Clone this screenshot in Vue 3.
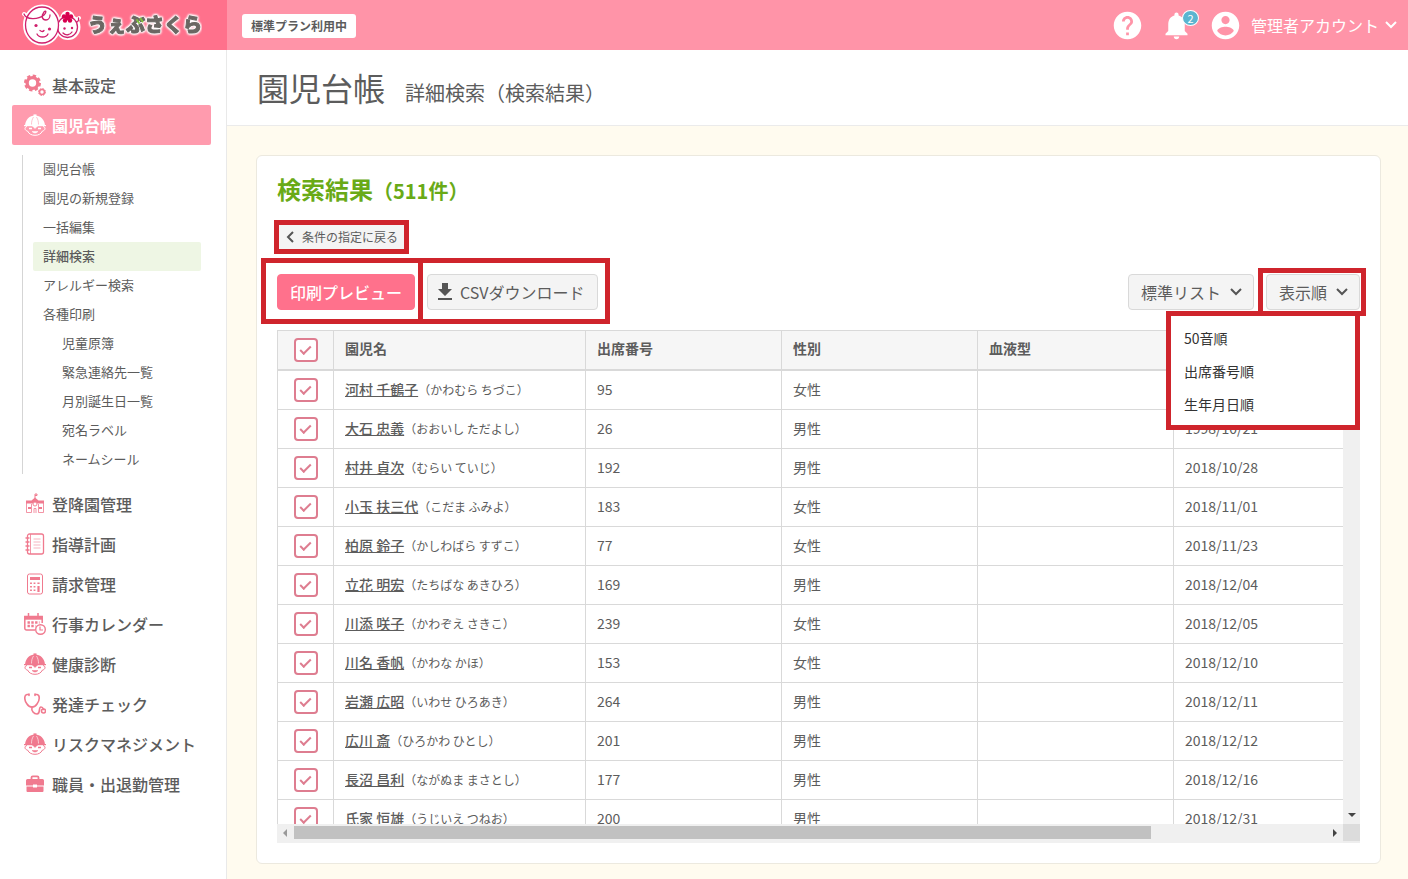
<script setup>
import { ref } from 'vue'

const menuTop = [
  { label: '基本設定', icon: 'gear' },
  { label: '園児台帳', icon: 'child', active: true },
]

const subMenu = [
  { label: '園児台帳' },
  { label: '園児の新規登録' },
  { label: '一括編集' },
  { label: '詳細検索', active: true },
  { label: 'アレルギー検索' },
  { label: '各種印刷' },
  { label: '児童原簿', nested: true },
  { label: '緊急連絡先一覧', nested: true },
  { label: '月別誕生日一覧', nested: true },
  { label: '宛名ラベル', nested: true },
  { label: 'ネームシール', nested: true },
]

const menuBottom = [
  { label: '登降園管理', icon: 'school' },
  { label: '指導計画', icon: 'note' },
  { label: '請求管理', icon: 'calc' },
  { label: '行事カレンダー', icon: 'calendar' },
  { label: '健康診断', icon: 'child' },
  { label: '発達チェック', icon: 'steth' },
  { label: 'リスクマネジメント', icon: 'child' },
  { label: '職員・出退勤管理', icon: 'case' },
]

const groups = [
  { items: menuTop, sub: subMenu },
  { items: menuBottom, sub: [] },
]

const rows = ref([
  { name: '河村 千鶴子', kana: 'かわむら ちづこ', no: 95, sex: '女性', birth: '1998/10/20' },
  { name: '大石 忠義', kana: 'おおいし ただよし', no: 26, sex: '男性', birth: '1998/10/21' },
  { name: '村井 貞次', kana: 'むらい ていじ', no: 192, sex: '男性', birth: '2018/10/28' },
  { name: '小玉 扶三代', kana: 'こだま ふみよ', no: 183, sex: '女性', birth: '2018/11/01' },
  { name: '柏原 鈴子', kana: 'かしわばら すずこ', no: 77, sex: '女性', birth: '2018/11/23' },
  { name: '立花 明宏', kana: 'たちばな あきひろ', no: 169, sex: '男性', birth: '2018/12/04' },
  { name: '川添 咲子', kana: 'かわぞえ さきこ', no: 239, sex: '女性', birth: '2018/12/05' },
  { name: '川名 香帆', kana: 'かわな かほ', no: 153, sex: '女性', birth: '2018/12/10' },
  { name: '岩瀬 広昭', kana: 'いわせ ひろあき', no: 264, sex: '男性', birth: '2018/12/11' },
  { name: '広川 斎', kana: 'ひろかわ ひとし', no: 201, sex: '男性', birth: '2018/12/12' },
  { name: '長沼 昌利', kana: 'ながぬま まさとし', no: 177, sex: '男性', birth: '2018/12/16' },
  { name: '氏家 恒雄', kana: 'うじいえ つねお', no: 200, sex: '男性', birth: '2018/12/31' },
])

const sortOptions = ['50音順', '出席番号順', '生年月日順']
const sortOpen = ref(true)
</script>

<template>
  <div class="shell">
    <header class="topbar">
      <a class="brand" href="#" aria-label="うぇぶさくら">
        <svg class="brand-art" viewBox="0 0 190 50" width="190" height="50">
          <g stroke="#fff" stroke-width="4" fill="#fff" stroke-linejoin="round" stroke-linecap="round">
            <ellipse cx="30" cy="25" rx="17" ry="18.500" />
            <ellipse cx="56" cy="27" rx="10.500" ry="11" />
            <circle cx="55.500" cy="17.500" r="5" />
            <path d="M12 14l6 4M63 21l4-3" />
          </g>
          <g fill="none" stroke="#cf1f6c" stroke-width="1.300" stroke-linecap="round">
            <ellipse cx="55.500" cy="27" rx="10" ry="10.500" />
            <ellipse cx="30" cy="25" rx="16.500" ry="18" fill="#fff" />
            <path d="M12 14c2 6 14 6 20 1 3-3 2-5 0-3-3 4-2 8 2 8 2 0 4-2 4-5" />
            <path d="M64.500 22c1.500 0 2.500-2 2-4" />
            <path d="M25 34c2 4 9 4 11 0M28 30.500q2.500 2 4 0M51 33c3 3 7 2 9-1" />
          </g>
          <g fill="#cf1f6c">
            <circle cx="24" cy="25.500" r="1.600" />
            <circle cx="37.500" cy="29" r="1.600" />
            <circle cx="52.500" cy="28.500" r="1.200" />
            <circle cx="60" cy="28" r="1.200" />
          </g>
          <g fill="#d8004f">
            <circle cx="55.500" cy="14" r="2.200" />
            <circle cx="59" cy="16.500" r="2.200" />
            <circle cx="58" cy="20.500" r="2.200" />
            <circle cx="53" cy="20.500" r="2.200" />
            <circle cx="52" cy="16.500" r="2.200" />
            <circle cx="55.500" cy="17.500" r="2.800" />
          </g>
          <text class="brand-text" x="76" y="32">うぇぶさくら</text>
          <path d="M125 20l2 3M128.500 18.500l2 3" stroke="#7fbe3c" stroke-width="2" stroke-linecap="round" />
        </svg>
      </a>
      <div class="topbar-main">
        <span class="plan">標準プラン利用中</span>
        <div class="tools">
          <button class="tool" type="button" aria-label="ヘルプ">
            <svg viewBox="0 0 24 24" width="33" height="33"><path fill="#fff" d="M12 2C6.480 2 2 6.480 2 12s4.480 10 10 10 10-4.480 10-10S17.520 2 12 2zm1 17h-2v-2h2v2zm2.070-7.750l-.9.920C13.450 12.900 13 13.500 13 15h-2v-.5c0-1.100.45-2.100 1.170-2.830l1.240-1.260c.37-.36.590-.86.590-1.410 0-1.100-.9-2-2-2s-2 .9-2 2H8c0-2.210 1.790-4 4-4s4 1.790 4 4c0 .88-.36 1.680-.93 2.250z" /></svg>
          </button>
          <button class="tool bell" type="button" aria-label="お知らせ">
            <svg viewBox="0 0 24 24" width="33" height="33"><path fill="#fff" d="M12 22c1.100 0 2-.9 2-2h-4c0 1.100.89 2 2 2zm6-6v-5c0-3.070-1.640-5.640-4.500-6.320V4c0-.83-.67-1.500-1.500-1.500s-1.500.67-1.500 1.500v.68C7.630 5.360 6 7.920 6 11v5l-2 2v1h16v-1l-2-2z" /></svg>
            <span class="count">2</span>
          </button>
          <button class="account" type="button">
            <svg viewBox="0 0 24 24" width="33" height="33"><path fill="#fff" d="M12 2C6.480 2 2 6.480 2 12s4.480 10 10 10 10-4.480 10-10S17.520 2 12 2zm0 3c1.660 0 3 1.340 3 3s-1.340 3-3 3-3-1.340-3-3 1.340-3 3-3zm0 14.200c-2.500 0-4.710-1.280-6-3.220.03-1.990 4-3.080 6-3.080 1.990 0 5.970 1.090 6 3.080-1.290 1.940-3.500 3.220-6 3.220z" /></svg>
            <span class="account-name">管理者アカウント</span>
            <svg viewBox="0 0 12 8" width="12" height="8"><path d="M1 1l5 5 5-5" fill="none" stroke="#fff" stroke-width="2" /></svg>
          </button>
        </div>
      </div>
    </header>

    <div class="body">
      <nav class="sidebar">
        <template v-for="(group, g) in groups" :key="g">
          <a v-for="item in group.items" :key="item.label" href="#" class="nav-item" :class="{ active: item.active }">
            <svg class="nav-icon" viewBox="0 0 22 22" width="22" height="22" fill="none" stroke="currentColor">
              <g v-if="item.icon === 'gear'">
                <circle cx="8.500" cy="9" r="5.400" stroke-width="3.400" />
                <circle cx="8.500" cy="9" r="7.300" stroke-width="2.400" stroke-dasharray="3.300 2.434" />
                <circle cx="18" cy="18" r="2.500" stroke-width="1.600" />
                <circle cx="18" cy="18" r="3.500" stroke-width="1" stroke-dasharray="1.600 1.149" />
              </g>
              <g v-else-if="item.icon === 'child'">
                <path d="M1 11.500C1.500 5.500 5.500 1.500 11 1.500s9.500 4 10 10z" fill="currentColor" stroke="none" />
                <path d="M9.500 1.200h3" stroke-width="1.600" />
                <path d="M0 11.600h22" stroke-width="1.200" />
                <path class="hat-line" d="M7.500 10.500c0-3 .5-5 2-7.500M14.500 10.500c0-3-.5-5-2-7.500" stroke-width=".6" />
                <path d="M3 12.500c-3 .5-2.500 4 .5 4.500 1.500 3 4 4.300 7.500 4.300s6-1.300 7.500-4.300c3-.5 3.500-4 .5-4.500" stroke-width="1" />
                <path d="M8.500 12l2.500 2.500 2.500-2.500z" fill="currentColor" stroke-width=".6" />
                <path d="M5 14.500h3M14 14.500h3" stroke-width="1.400" />
                <path d="M8 17.500c2 2 4 2 6 0z" fill="currentColor" stroke-width=".5" />
              </g>
              <g v-else-if="item.icon === 'school'">
                <path d="M2 10.500V7.500h5.500L11 4.500l3.500 3H20v3z" fill="currentColor" stroke="none" />
                <path d="M11 5V1h2v1.500h-2" stroke-width="1" />
                <path d="M2.500 10v9.500h5V11M19.500 10v9.500h-5V11M10 20v-4.500h2V20" stroke-width=".8" />
                <circle cx="11" cy="11" r="2" fill="#fff" stroke-width=".9" />
                <path d="M4 15h3M15 15h3" stroke-width="2.200" />
              </g>
              <g v-else-if="item.icon === 'note'">
                <rect x="3.500" y="1" width="16" height="20" rx="2" stroke-width="1.300" />
                <path d="M6.500 1v20" stroke-width=".8" />
                <path d="M2 5h3M2 9h3M2 13h3M2 17h3" stroke-width="1.400" stroke-linecap="round" />
                <path d="M9.500 6h7M9.500 9h7M9.500 12h7M9.500 15h7" stroke-width=".8" opacity=".7" />
              </g>
              <g v-else-if="item.icon === 'calc'">
                <rect x="3.500" y="1" width="15" height="20" rx="2" stroke-width="1" />
                <path d="M6 5.500h10" stroke-width="3" />
                <path d="M7 9.500v9M10.500 9.500v9" stroke-width="1.800" stroke-dasharray="1.600 1.900" />
                <path d="M14.500 9.500v1.600M14.500 13v6" stroke-width="2.200" />
              </g>
              <g v-else-if="item.icon === 'calendar'">
                <path d="M11 17H2.500a1.700 1.700 0 0 1-1.700-1.700V3.500h17.400V10" stroke-width="1.500" />
                <path d="M.5 5h18" stroke-width="3.400" />
                <path d="M4.500 0v5M14 0v5" stroke-width="1.500" />
                <path d="M3.500 9.500h12M3.500 13h8" stroke-width="2.300" stroke-dasharray="2.400 1.400" />
                <circle cx="16.500" cy="16.500" r="4.800" fill="#fff" stroke-width="1.400" />
                <path d="M16 13.500v3.500h3" stroke-width="1.200" />
              </g>
              <g v-else-if="item.icon === 'steth'" stroke-width="1.600" stroke-linecap="round">
                <path d="M4.500 1.500H3C0 2 0 7 3 11c1.500 2.500 3.500 3 5 3s3.500-.5 5-3c3-4 3-9 0-9.500h-1.500" />
                <path d="M5 1v1.500M11 1v1.500" />
                <path d="M8 14c-1 4 2 7 5 7 4 0 1-7 4-7 2 0 2 1 2.500 2.500" />
                <circle cx="19.500" cy="18" r="2" />
              </g>
              <g v-else>
                <path d="M7.500 6V4.500c0-.7.500-1.200 1.200-1.200h4.600c.7 0 1.200.5 1.200 1.200V6" stroke-width="1.800" />
                <path d="M3.500 6h15A1.500 1.500 0 0 1 20 7.500v5h-7V11.500H9v1H2v-5A1.500 1.500 0 0 1 3.500 6zM2.500 13.500H9v1h4v-1h6.500V18a1 1 0 0 1-1 1h-15a1 1 0 0 1-1-1z" fill="currentColor" stroke="none" />
              </g>
            </svg>
            <span>{{ item.label }}</span>
          </a>
          <ul v-if="group.sub.length" class="sub">
            <li v-for="s in group.sub" :key="s.label">
              <a href="#" :class="{ nested: s.nested, current: s.active }">{{ s.label }}</a>
            </li>
          </ul>
        </template>
      </nav>

      <main class="main">
        <div class="page-head">
          <h1>園児台帳</h1>
          <p>詳細検索（検索結果）</p>
        </div>

        <section class="card">
          <h2>検索結果<small>（511件）</small></h2>

          <div class="marked back-mark">
            <button class="btn back" type="button">
              <svg viewBox="0 0 8 12" width="8" height="12"><path d="M7 1L2 6l5 5" fill="none" stroke="#555" stroke-width="2" /></svg>
              条件の指定に戻る
            </button>
          </div>

          <div class="toolbar">
            <div class="marked print-mark">
              <button class="btn primary" type="button">印刷プレビュー</button>
            </div>
            <div class="marked csv-mark">
              <button class="btn csv" type="button">
                <svg viewBox="0 0 24 24" width="24" height="24"><path fill="#555" d="M19 9h-4V3H9v6H5l7 7 7-7zM5 18v2h14v-2H5z" /></svg>
                CSVダウンロード
              </button>
            </div>
            <div class="select-wrap">
              <select class="btn" aria-label="リストの種類">
                <option>標準リスト</option>
              </select>
              <svg viewBox="0 0 12 8" width="12" height="8"><path d="M1 1l5 5 5-5" fill="none" stroke="#555" stroke-width="2" /></svg>
            </div>
            <div class="marked sort-mark">
              <button class="btn sort" type="button" :aria-expanded="sortOpen" @click="sortOpen = !sortOpen">
                表示順
                <svg viewBox="0 0 12 8" width="12" height="8"><path d="M1 1l5 5 5-5" fill="none" stroke="#555" stroke-width="2" /></svg>
              </button>
              <ul v-if="sortOpen" class="sort-menu">
                <li v-for="o in sortOptions" :key="o"><button type="button">{{ o }}</button></li>
              </ul>
            </div>
          </div>

          <div class="grid-frame">
            <div class="grid-view">
              <table>
                <colgroup>
                  <col class="c-check" /><col class="c-name" /><col class="c-std" /><col class="c-std" /><col class="c-std" /><col class="c-std" />
                </colgroup>
                <thead>
                  <tr>
                    <th class="check"><input type="checkbox" checked aria-label="すべて選択" /></th>
                    <th>園児名</th>
                    <th>出席番号</th>
                    <th>性別</th>
                    <th>血液型</th>
                    <th>生年月日</th>
                  </tr>
                </thead>
                <tbody>
                  <tr v-for="r in rows" :key="r.no">
                    <td class="check"><input type="checkbox" checked :aria-label="r.name" /></td>
                    <td><a href="#">{{ r.name }}</a><span class="kana">（{{ r.kana }}）</span></td>
                    <td>{{ r.no }}</td>
                    <td>{{ r.sex }}</td>
                    <td></td>
                    <td>{{ r.birth }}</td>
                  </tr>
                </tbody>
              </table>
            </div>
            <div class="vbar" aria-hidden="true">
              <svg viewBox="0 0 8 4" width="8" height="4"><path d="M0 0h8L4 4z" fill="#444" /></svg>
            </div>
            <div class="hbar" aria-hidden="true">
              <svg viewBox="0 0 4 8" width="4" height="8"><path d="M4 0v8L0 4z" fill="#999" /></svg>
              <div class="track"><div class="thumb"></div></div>
              <svg viewBox="0 0 4 8" width="4" height="8"><path d="M0 0v8l4-4z" fill="#444" /></svg>
            </div>
            <div class="corner" aria-hidden="true"></div>
          </div>
        </section>
      </main>
    </div>
  </div>
</template>

<style>
body {
  margin: 0;
  background: #fff;
}
</style>

<style scoped>
.shell {
  height: 100vh;
  display: flex;
  flex-direction: column;
  overflow: hidden;
  color: #5c5c5c;
  font-family: "Noto Sans CJK JP", "Noto Sans", sans-serif;
  font-size: 14px;
  line-height: 20px;
}
.shell *,
.shell *::before,
.shell *::after {
  box-sizing: border-box;
}
button,
select {
  font: inherit;
  color: inherit;
  margin: 0;
}
a {
  color: inherit;
  text-decoration: none;
}
ul {
  list-style: none;
  margin: 0;
  padding: 0;
}
svg {
  display: block;
  flex: none;
}

/* top bar */
.topbar {
  flex: none;
  display: flex;
  height: 50px;
  background: #ff94a8;
}
.brand {
  flex: none;
  width: 227px;
  padding-left: 12px;
  background: #ff718c;
}
.brand-text {
  font-size: 19px;
  font-weight: 900;
  fill: #6b6763;
  stroke: #6b6763;
  stroke-width: 1px;
  stroke-linejoin: round;
  filter: drop-shadow(0 0 1px #fff) drop-shadow(0 0 1px #fff) drop-shadow(0 0 0 #fff);
}
.topbar-main {
  flex: 1;
  display: flex;
  align-items: center;
  justify-content: space-between;
  padding: 0 11px 0 15px;
}
.plan {
  margin-top: 2px;
  padding: 2px 9px;
  border-radius: 3px;
  background: #fff;
  font-size: 12px;
  font-weight: 700;
}
.tools {
  display: flex;
  align-items: center;
  gap: 16px;
}
.tool,
.account {
  position: relative;
  display: flex;
  align-items: center;
  padding: 0;
  border: 0;
  background: none;
  color: #fff;
}
.account {
  font-size: 16px;
}
.account-name {
  margin: 0 6px 0 9px;
}
.count {
  position: absolute;
  top: 1px;
  right: -6px;
  width: 17px;
  height: 16px;
  border: 1px solid #fff;
  border-radius: 50%;
  background: #5bb5d0;
  font-size: 11px;
  line-height: 14px;
  text-align: center;
}

.body {
  flex: 1;
  display: flex;
  min-height: 0;
}

/* sidebar */
.sidebar {
  flex: none;
  width: 227px;
  padding: 15px 15px 0 12px;
  border-right: 1px solid #e9e9e9;
  background: #fff;
}
.nav-item {
  display: flex;
  align-items: center;
  gap: 6px;
  height: 40px;
  padding-left: 12px;
  border-radius: 2px;
  font-size: 16px;
  font-weight: 500;
}
.nav-icon {
  color: #f07a8f;
}
.hat-line {
  stroke: #fff;
}
.nav-item.active {
  background: #ff9bae;
  color: #fff;
  font-weight: 700;
}
.active .nav-icon {
  color: #fff;
}
.active .hat-line {
  stroke: #ff9bae;
}
.sub {
  margin: 10px;
  padding-left: 10px;
  border-left: 1px solid #d5d5d5;
  font-size: 13px;
}
.sub a {
  display: block;
  padding: 0 0 2px 10px;
  border-radius: 2px;
  line-height: 27px;
}
.sub .nested {
  padding-left: 29px;
}
.sub .current {
  background: #eef6e4;
  font-weight: 500;
}

/* page */
.main {
  flex: 1;
  min-width: 0;
  display: flex;
  flex-direction: column;
  background: #fffbef;
}
.page-head {
  flex: none;
  display: flex;
  align-items: baseline;
  gap: 20px;
  padding: 13px 30px 14px;
  border-bottom: 1px solid #ebebeb;
  background: #fff;
}
.page-head h1 {
  margin: 0;
  font-size: 32px;
  font-weight: 400;
  line-height: 48px;
}
.page-head p {
  margin: 0;
  font-size: 20px;
}
.card {
  flex: 1;
  min-height: 0;
  display: flex;
  flex-direction: column;
  margin: 29px 27px 15px 29px;
  padding: 20px;
  border: 1px solid #ece9df;
  border-radius: 6px;
  background: #fff;
}
.card h2 {
  margin: 0;
  color: #69aa17;
  font-size: 24px;
  font-weight: 700;
  line-height: 26px;
}
.card h2 small {
  font-size: 20px;
}

.btn {
  display: flex;
  align-items: center;
  height: 36px;
  border: 1px solid #d9d9d9;
  border-radius: 4px;
  background: #f4f4f4;
  font-size: 16px;
  white-space: nowrap;
}
.primary {
  padding: 0 12px;
  border-color: #ff718c;
  background: #ff718c;
  color: #fff;
  font-weight: 500;
}
.csv {
  gap: 3px;
  padding: 0 12px 0 5px;
}
.back {
  gap: 8px;
  height: 28px;
  padding: 0 7px 0 8px;
  border-color: #eee;
  font-size: 12px;
}

/* highlighted controls */
.marked {
  position: relative;
  display: flex;
}
.marked::after {
  content: "";
  position: absolute;
  border: 5px solid #cf242c;
  pointer-events: none;
}
.back-mark {
  align-self: flex-start;
  margin: 19px 0 23px;
}
.back-mark::after {
  inset: -3px;
}
.print-mark::after {
  inset: -16px -8px -14px -16px;
}
.csv-mark::after {
  inset: -16px -12px -14px -9px;
}
.sort-mark::after {
  inset: -6px -6px -6px -8px;
}

.toolbar {
  flex: none;
  display: flex;
  gap: 12px;
}
.select-wrap {
  position: relative;
  margin-left: auto;
}
.select-wrap .btn {
  appearance: none;
  padding: 0 31px 0 12px;
}
.select-wrap svg {
  position: absolute;
  right: 12px;
  top: 14px;
  pointer-events: none;
}
.sort {
  gap: 9px;
  padding: 0 11px 0 12px;
}
.sort-menu {
  position: absolute;
  z-index: 2;
  top: 37px;
  right: 0;
  width: 194px;
  padding: 6px 0 4px;
  border: 5px solid #cf242c;
  background: #fff;
}
.sort-menu button {
  display: block;
  width: 100%;
  padding: 0 13px;
  border: 0;
  background: none;
  color: #333;
  line-height: 33px;
  text-align: left;
}

/* result grid */
.grid-frame {
  flex: 1;
  min-height: 0;
  display: grid;
  grid-template-columns: minmax(0, 1fr) 17px;
  grid-template-rows: minmax(0, 1fr) 19px;
  margin-top: 20px;
}
.grid-view {
  overflow: hidden;
}
table {
  width: 1093px;
  table-layout: fixed;
  border-collapse: separate;
  border-spacing: 0;
  border-left: 1px solid #d9d9d9;
}
.c-check {
  width: 56px;
}
.c-name {
  width: 252px;
}
.c-std {
  width: 196px;
}
th,
td {
  padding: 0 11px 2px;
  border-right: 1px solid #d9d9d9;
  border-bottom: 1px solid #d9d9d9;
  text-align: left;
  white-space: nowrap;
}
th {
  height: 41px;
  padding-bottom: 4px;
  border-top: 1px solid #d9d9d9;
  border-bottom-width: 2px;
  background: #f6f6f6;
  font-weight: 700;
}
td {
  height: 39px;
}
td a {
  font-weight: 500;
  text-decoration: underline;
}
.kana {
  font-size: 12px;
}
th.check,
td.check {
  padding: 0;
}
.check input {
  appearance: none;
  display: flex;
  align-items: center;
  justify-content: center;
  width: 24px;
  height: 24px;
  margin: 0 auto;
  border: 2px solid #de7d90;
  border-radius: 4px;
  background: #fff;
}
.check input:checked::after {
  content: "";
  width: 11px;
  height: 6px;
  margin-bottom: 3px;
  border: solid #de7d90;
  border-width: 0 0 2px 2px;
  transform: rotate(-45deg);
}
.vbar {
  display: flex;
  align-items: flex-end;
  justify-content: center;
  padding-bottom: 7px;
  background: #f0f0f0;
}
.hbar {
  display: flex;
  align-items: center;
  gap: 7px;
  padding: 0 6px 2px;
  background: #f0f0f0;
}
.track {
  flex: 1;
}
.thumb {
  width: 83%;
  height: 13px;
  background: #c1c1c1;
}
.corner {
  border-bottom: 2px solid #eee;
  background: #dcdcdc;
}
</style>
